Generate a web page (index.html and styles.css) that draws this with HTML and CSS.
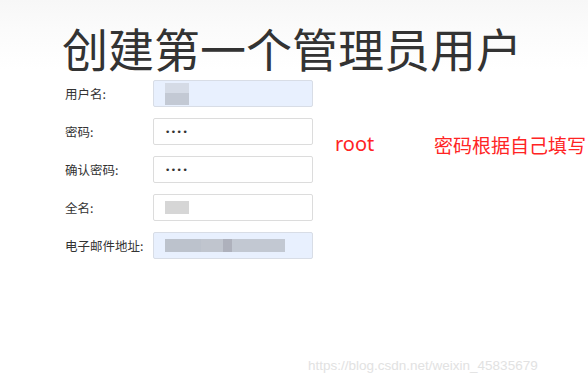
FILE: index.html
```html
<!DOCTYPE html>
<html lang="zh">
<head>
<meta charset="utf-8">
<link rel="stylesheet" href="styles.css">
</head>
<body>
<div class="page">
  <h1 class="title">创建第一个管理员用户</h1>
  <div class="form">
    <div class="row">
      <label class="label">用户名:</label>
      <div class="field autofill"><span class="blur blur-user"></span></div>
    </div>
    <div class="row">
      <label class="label">密码:</label>
      <div class="field"><span class="dots">••••</span></div>
    </div>
    <div class="row">
      <label class="label">确认密码:</label>
      <div class="field"><span class="dots">••••</span></div>
    </div>
    <div class="row">
      <label class="label">全名:</label>
      <div class="field"><span class="blur blur-name"></span></div>
    </div>
    <div class="row">
      <label class="label">电子邮件地址:</label>
      <div class="field autofill"><span class="blur blur-mail"></span></div>
    </div>
  </div>
  <span class="note note-root">root</span>
  <span class="note note-pwd">密码根据自己填写</span>
  <span class="watermark">https://blog.csdn.net/weixin_45835679</span>
</div>
</body>
</html>
```
FILE: styles.css
```css
html, body {
  margin: 0;
  padding: 0;
  background: #fff;
}
.page {
  position: relative;
  width: 588px;
  height: 385px;
  overflow: hidden;
  background: linear-gradient(to bottom, #f7f7f7 0px, #fbfbfb 30px, #ffffff 70px);
  font-family: "Noto Sans CJK SC", "Noto Sans", sans-serif;
}
.title {
  margin: 0;
  padding: 19px 0 0 62px;
  font-size: 46px;
  line-height: 57px;
  font-weight: 400;
  color: #333;
  letter-spacing: 0;
  white-space: nowrap;
}
.form {
  display: flex;
  flex-direction: column;
  gap: 11px;
  padding: 4px 0 0 65px;
}
.row {
  display: flex;
  align-items: center;
  height: 27px;
}
.label {
  width: 88px;
  font-size: 12.5px;
  color: #333;
}
.field {
  box-sizing: border-box;
  width: 160px;
  height: 27px;
  border: 1px solid #dcdcdc;
  border-radius: 2px;
  background: #fff;
  display: flex;
  align-items: center;
  padding-left: 11px;
}
.field.autofill {
  background: #e8f0fe;
  border-color: #d8dde6;
}
.dots {
  font-family: "DejaVu Sans", sans-serif;
  font-size: 9px;
  letter-spacing: 0.5px;
  color: #333;
}
.blur {
  display: block;
  height: 13px;
  filter: blur(0.6px);
}
.blur-user {
  width: 24px;
  height: 22px;
  background: linear-gradient(to bottom, #d5dbe6 0 45%, #c3c9d4 45% 100%);
}
.blur-name {
  width: 24px;
  background: #d6d6d6;
}
.blur-mail {
  width: 120px;
  background: linear-gradient(to right, #bcc2cc 0 30%, #c0c5ce 30% 48%, #aeb1bc 48% 56%, #c2c8d2 56% 100%);
}
.note {
  position: absolute;
  color: #ff2424;
  white-space: nowrap;
}
.note-root {
  left: 335px;
  top: 131px;
  font-family: "Noto Sans", sans-serif;
  font-size: 20px;
  line-height: 26px;
}
.note-pwd {
  left: 434px;
  top: 132px;
  font-size: 19px;
  line-height: 26px;
}
.watermark {
  position: absolute;
  left: 308px;
  top: 358px;
  font-family: "Liberation Sans", sans-serif;
  font-size: 13.5px;
  color: #e2e2e2;
}
```
